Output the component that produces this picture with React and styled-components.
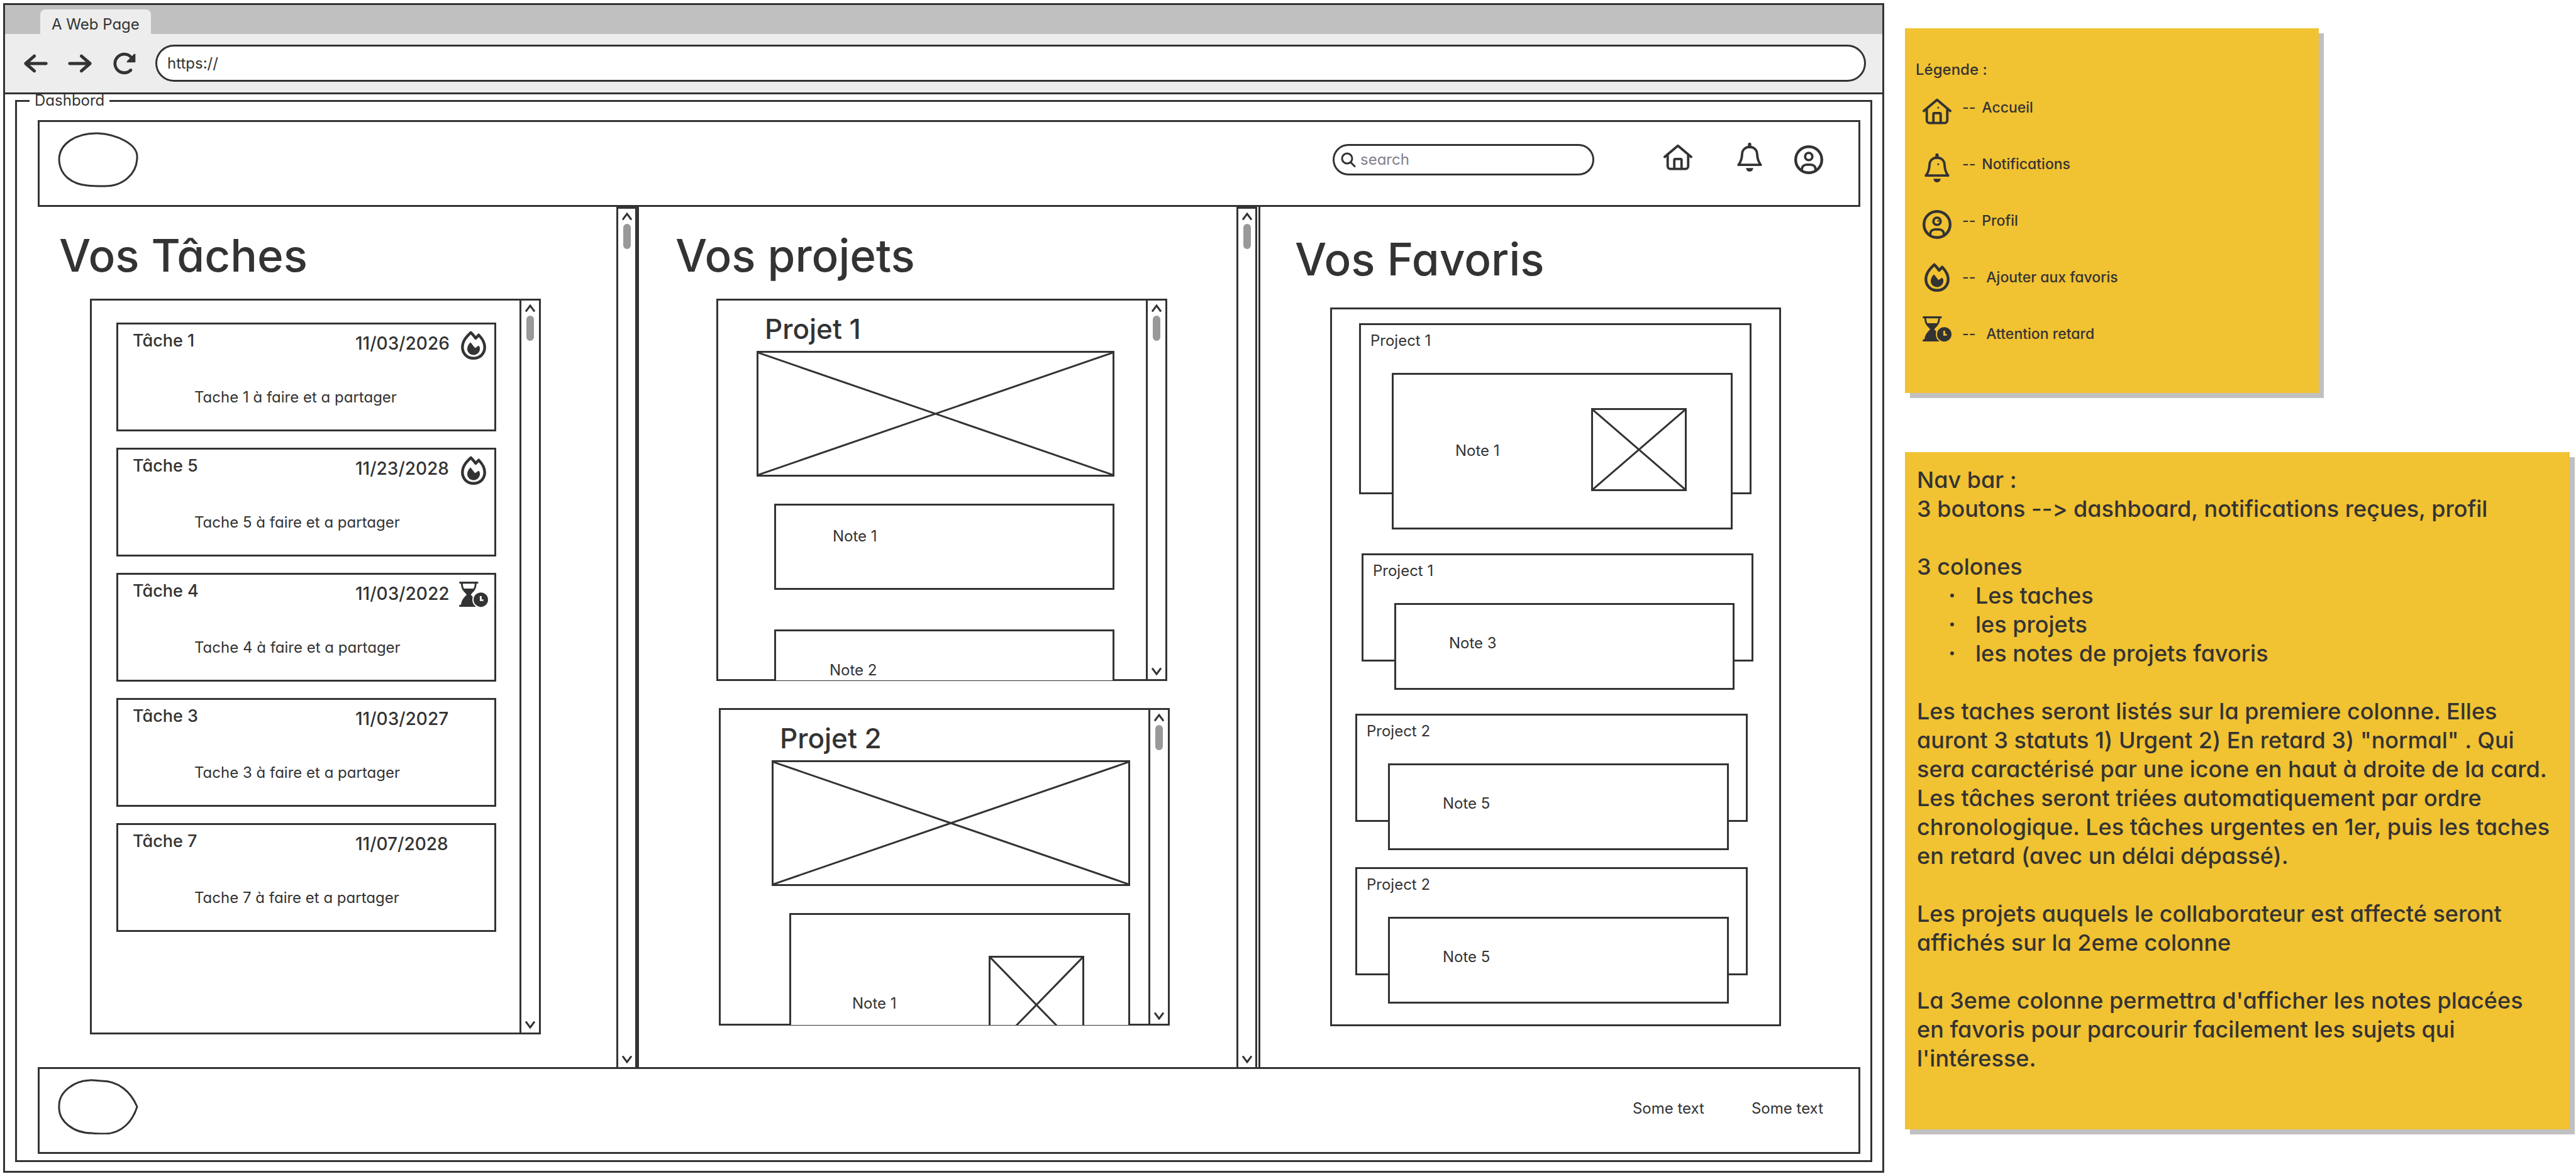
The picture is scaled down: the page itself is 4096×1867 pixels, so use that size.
import React, { useId } from "react";
import styled, { createGlobalStyle } from "styled-components";

const ink = "#333333";
const line = `3px solid ${ink}`;

const GlobalStyle = createGlobalStyle`
  *, *::before, *::after { box-sizing: border-box; }
  body {
    margin: 0;
    background: #ffffff;
    color: ${ink};
    font-family: Inter, "Liberation Sans", Arial, sans-serif;
    font-feature-settings: "cv11", "calt" 0;
    font-size: 24px;
    line-height: 32px;
  }
  h1, h2, h3, p, ul, fieldset { margin: 0; padding: 0; font-weight: inherit; }
  ul { list-style: none; }
  button, input { font: inherit; font-feature-settings: inherit; color: inherit; }
`;

/* ---------- page ---------- */

const Page = styled.div`
  display: grid;
  grid-template-columns: minmax(0, 1fr) 1100px;
  align-items: start;
  padding: 5px 0 0 5px;
`;

const Browser = styled.main`
  border: ${line};
`;

const TitleBar = styled.div`
  display: flex;
  align-items: flex-end;
  height: 46px;
  padding-left: 56px;
  background: #c0c0c0;
`;

const Tab = styled.div`
  height: 39px;
  padding: 6px 18px 0 18px;
  border-radius: 8px 8px 0 0;
  background: #ededed;
  line-height: 36px;
`;

const Toolbar = styled.div`
  display: flex;
  align-items: center;
  gap: 30px;
  height: 96px;
  padding: 0 26px 0 29px;
  border-bottom: ${line};
  background: #ededed;
`;

const IconButton = styled.button`
  display: flex;
  align-items: center;
  justify-content: center;
  padding: 0 0 ${(p) => (p.$raised ? 8 : 0)}px;
  border: 0;
  background: none;
`;

const Address = styled.input`
  flex: 1;
  min-width: 0;
  height: 59px;
  padding: 0 16px;
  border: ${line};
  border-radius: 30px;
  background: #ffffff;
`;

const Dashboard = styled.fieldset`
  min-width: 0;
  margin: 0 16px 14px;
  border: ${line};
`;

const Legend = styled.legend`
  margin-left: 20px;
  padding: 0 8px;
  line-height: 20px;
`;

const DashboardBody = styled.div`
  padding: 21px 16px 10px 33px;
`;

const Bar = styled.div`
  display: flex;
  align-items: center;
  height: 138px;
  padding: 0 56px 13px 29px;
  border: ${line};
`;

const Logo = styled.svg`
  display: block;
  width: 128px;
  height: 88px;
  margin-right: auto;
  fill: none;
  stroke: ${ink};
  stroke-width: 3;
`;

const SearchBox = styled.label`
  display: flex;
  align-items: center;
  gap: 7px;
  width: 416px;
  height: 50px;
  padding-left: 10px;
  border: ${line};
  border-radius: 25px;
`;

const SearchInput = styled.input`
  flex: 1;
  min-width: 0;
  padding: 0;
  border: 0;
  outline: 0;
  background: none;
  &::placeholder { color: #82808c; opacity: 1; }
`;

const Nav = styled.nav`
  display: grid;
  grid-template-columns: 66px 46px 46px;
  justify-items: start;
  gap: 48px;
  margin-left: 110px;
`;

const FooterLinks = styled.nav`
  display: flex;
  gap: 75px;
  padding-top: 6px;
`;

const FooterLink = styled.a`
  color: inherit;
  text-decoration: none;
`;

/* ---------- columns ---------- */

const Columns = styled.div`
  display: grid;
  grid-template-columns: 953fr 988fr 957fr;
`;

const Column = styled.section`
  display: flex;
  min-width: 0;
  padding-right: ${(p) => p.$gutter || 0}px;
  border-left: ${(p) => (p.$ruled ? line : "none")};
`;

const ColumnBody = styled.div`
  flex: 1;
  min-width: 0;
  padding: ${(p) => p.$top}px ${(p) => p.$right}px 52px ${(p) => p.$left}px;
`;

const ColumnTitle = styled.h1`
  margin: 0 0 ${(p) => p.$below}px ${(p) => -p.$outdent}px;
  font-size: 71px;
  font-weight: 500;
  line-height: 86px;
`;

const Track = styled.div`
  display: flex;
  flex: none;
  flex-direction: column;
  align-items: center;
  gap: 6px;
  width: ${(p) => (p.$outer ? 33 : 31)}px;
  padding: 6px 0;
  border-left: ${line};
  border-right: ${(p) => (p.$outer ? line : "none")};
  border-top: ${(p) => (p.$outer ? line : "none")};
`;

const Thumb = styled.div`
  width: 12px;
  height: 40px;
  margin-bottom: auto;
  border-radius: 6px;
  background: #999999;
`;

const Panel = styled.div`
  display: flex;
  height: ${(p) => (p.$height ? p.$height + "px" : "auto")};
  border: ${line};
  & + & { margin: 43px -4px 0 4px; }
`;

/* ---------- tasks ---------- */

const TaskList = styled.ul`
  display: flex;
  flex: 1;
  flex-direction: column;
  gap: 26px;
  padding: 35px 37px 160px 39px;
`;

const TaskCard = styled.li`
  padding: 10px 4px 35px 23px;
  border: ${line};
`;

const TaskHead = styled.div`
  display: grid;
  grid-template-columns: 1fr 165px 52px;
  align-items: start;
  min-height: 46px;
  font-size: 27px;
  font-weight: 500;
`;

const TaskDate = styled.time`
  font-size: 28px;
  line-height: 40px;
`;

const TaskText = styled.p`
  margin: 44px 0 0 98px;
`;

/* ---------- projects ---------- */

const ProjectBody = styled.div`
  flex: 1;
  min-width: 0;
  margin-bottom: -2px;
  padding: 18px ${(p) => p.$right}px 0 ${(p) => p.$left}px;
  overflow: hidden;
`;

const ProjectTitle = styled.h2`
  margin: 0 0 8px 13px;
  font-size: 44px;
  font-weight: 500;
  line-height: 54px;
`;

const Picture = styled.div`
  flex: none;
  width: ${(p) => (p.$width ? p.$width + "px" : "auto")};
  height: ${(p) => p.$height}px;
  border: ${line};
  svg { display: block; width: 100%; height: 100%; }
`;

const Note = styled.div`
  display: flex;
  align-items: flex-start;
  justify-content: space-between;
  height: ${(p) => p.$height}px;
  margin-top: ${(p) => p.$above}px;
  margin-left: 28px;
  padding: 0 70px 0 ${(p) => p.$inset}px;
  border: ${line};
  background: #ffffff;
`;

const Drop = styled.div`
  padding-top: ${(p) => p.$by}px;
`;

/* ---------- favourites ---------- */

const FavouriteList = styled.ul`
  flex: 1;
  min-width: 0;
  padding: 22px 0 33px;
`;

const Favourite = styled.li`
  margin-top: ${(p) => p.$above}px;
  padding: 0 ${(p) => p.$right}px ${(p) => p.$overlap}px ${(p) => p.$left}px;
`;

const FavouriteCard = styled.div`
  padding: 9px 0 0 15px;
  border: ${line};
  ${Note} {
    margin: 35px 27px ${(p) => -p.$overlap - 3}px 34px;
  }
`;

/* ---------- sticky notes ---------- */

const Side = styled.aside`
  display: grid;
  gap: 94px;
  padding: 40px 10px 0 33px;
`;

const Sticky = styled.section`
  width: ${(p) => (p.$width ? p.$width + "px" : "auto")};
  padding: ${(p) => p.$top}px 0 ${(p) => p.$bottom}px ${(p) => p.$left}px;
  background: #f1c232;
  box-shadow: 8px 8px 0 #c0c0c0;
  font-size: 23px;
  font-weight: 500;
`;

const LegendTitle = styled.h2`
  font-size: 24px;
  line-height: 30px;
`;

const LegendRow = styled.li`
  display: flex;
  align-items: center;
  height: 90px;
`;

const LegendIcon = styled.span`
  display: flex;
  align-items: ${(p) => p.$align};
  width: 74px;
  height: 58px;
  padding-left: 11px;
`;

const LegendLabel = styled.span`
  padding-left: ${(p) => (p.$wide ? 17 : 10)}px;
`;

const SpecText = styled.div`
  font-size: 36px;
  line-height: 46px;
  white-space: pre-line;
`;

const Gap = styled.div`
  height: 46px;
`;

const Bullet = styled.li`
  display: flex;
  align-items: center;
  gap: 34px;
  padding-left: 53px;
  &::before {
    content: "";
    width: 6px;
    height: 6px;
    border-radius: 50%;
    background: ${ink};
  }
`;

/* ---------- icons ---------- */

const IconSvg = styled.svg`
  display: block;
  flex: none;
  width: ${(p) => p.$size || 46}px;
  height: ${(p) => p.$size || 46}px;
  fill: none;
  stroke: ${ink};
  stroke-width: 4;
  stroke-linecap: round;
  stroke-linejoin: round;
`;

const Dot = () => <circle cx="26" cy="18" r="1.5" fill={ink} stroke="none" />;

const Home = ({ dot }) => (
  <IconSvg viewBox="0 0 48 48" aria-hidden="true">
    <path d="M2 23.500 24 5l22 18.500" />
    <path d="M7 20v18.500a5 5 0 0 0 5 5h24a5 5 0 0 0 5-5V20" />
    <path d="M18 43V28.500a1.500 1.500 0 0 1 1.500-1.500h9a1.500 1.500 0 0 1 1.500 1.500V43" />
    {dot && <Dot />}
  </IconSvg>
);

const Bell = ({ dot }) => (
  <IconSvg viewBox="0 0 48 48" aria-hidden="true">
    <path d="M24 2.500v4" strokeWidth="5.500" />
    <path d="M5.500 36.700h37C39.500 33 36.800 28 36.500 19 36.200 11 30.500 7 24 7S11.800 11 11.500 19C11.200 28 8.500 33 5.500 36.700Z" />
    <path d="M18 42h12a6 6 0 0 1-12 0Z" fill={ink} stroke="none" />
    {dot && <Dot />}
  </IconSvg>
);

const Profile = ({ dot }) => (
  <IconSvg viewBox="0 0 48 48" aria-hidden="true">
    <circle cx="24" cy="24" r="21.700" strokeWidth="4.600" />
    <circle cx="24" cy="18.700" r="6" />
    <path d="M12.500 41C12.500 35 16.500 32.200 20.500 32.200h7C31.500 32.200 35.500 35 35.500 41" />
    {dot && <Dot />}
  </IconSvg>
);

const Fire = () => (
  <IconSvg viewBox="0 0 48 48" aria-hidden="true">
    <path
      strokeWidth="4.600"
      d="M19.500 3C12 10 5.500 17 5.500 27.500 5.500 38 13.500 45.700 24 45.700S42.500 38 42.500 27.500C42.500 19 38.500 13 32.500 7L27.500 12.500C25 8.500 22.500 6 19.500 3Z"
    />
    <path
      fill={ink}
      stroke="none"
      d="M18.600 19.300C20.500 20.500 23 24.500 26.500 28.800L32 24.700C33.500 25 34.500 27 34.500 29.700 34.500 36 29.500 40.200 24 40.200S13.500 36 13.500 30C13.500 26 16 22 18.600 19.300Z"
    />
  </IconSvg>
);

const Late = () => {
  const id = useId();
  return (
    <IconSvg viewBox="0 0 48 48" aria-hidden="true">
      <mask id={id} maskUnits="userSpaceOnUse" x="0" y="0" width="48" height="48">
        <rect width="48" height="48" fill="#fff" stroke="none" />
        <circle cx="36" cy="31" r="14" fill="#000" stroke="none" />
      </mask>
      <g mask={`url(#${id})`}>
        <path d="M1.700 2.700h28.600" strokeWidth="3.400" />
        <path d="M4.500 4C4.500 14 10 17 14 22M27.500 4C27.500 14 22 17 18 22" strokeWidth="3" />
        <path
          fill={ink}
          stroke="none"
          d="M7 12.500h18C23 17 19.500 19 18.500 21.500 20 25 27.500 28 29 40H3C4.500 28 12 25 13.500 21.500 12.500 19 9 17 7 12.500Z"
        />
        <path d="M1.700 41.200h28.600" strokeWidth="3.400" />
      </g>
      <path
        fill={ink}
        stroke="none"
        fillRule="evenodd"
        d="M36 19a12 12 0 1 1 0 24 12 12 0 0 1 0-24ZM34.400 25v8h6v-2.600h-3V25Z"
      />
    </IconSvg>
  );
};

const Magnifier = () => (
  <IconSvg $size={24} viewBox="0 0 24 24" aria-hidden="true">
    <circle cx="10" cy="10" r="8" strokeWidth="3" />
    <path d="m15.500 16 6.500 6.500" strokeWidth="3" />
  </IconSvg>
);

const Arrow = ({ flip }) => (
  <IconSvg $size={40} viewBox="0 0 42 42" aria-hidden="true">
    <path
      strokeWidth="5.200"
      d={flip ? "M4 21h34M23.500 8.500 38 21 23.500 33.500" : "M38 21H4M18.500 8.500 4 21l14.500 12.500"}
    />
  </IconSvg>
);

const Reload = () => (
  <IconSvg $size={40} viewBox="0 0 42 42" aria-hidden="true">
    <path strokeWidth="5" d="M32.500 32A15.500 15.500 0 1 1 33 10.500" />
    <path fill={ink} strokeWidth="2.500" d="M39 6v12H27Z" />
  </IconSvg>
);

const Chevron = ({ down }) => (
  <svg width="16" height="12" viewBox="0 0 16 12" fill="none" stroke={ink} strokeWidth="3" aria-hidden="true">
    <path d={down ? "M1 0.500 8 10 15 0.500" : "M1 11.500 8 2l7 9.500"} />
  </svg>
);

const Cross = (props) => (
  <Picture {...props} role="img" aria-label="Image">
    <svg viewBox="0 0 100 100" preserveAspectRatio="none" stroke={ink} strokeWidth="3">
      <path d="M0 0 100 100M100 0 0 100" vectorEffect="non-scaling-stroke" />
    </svg>
  </Picture>
);

const Scrollbar = ({ outer }) => (
  <Track $outer={outer}>
    <Chevron />
    <Thumb />
    <Chevron down />
  </Track>
);

/* ---------- content ---------- */

const tasks = [
  { n: 1, date: "11/03/2026", Icon: Fire },
  { n: 5, date: "11/23/2028", Icon: Fire },
  { n: 4, date: "11/03/2022", Icon: Late },
  { n: 3, date: "11/03/2027" },
  { n: 7, date: "11/07/2028" },
];

const favourites = [
  { project: 1, note: 1, left: 43, right: 44, overlap: 56, above: 0, height: 249, inset: 98, drop: 105, picture: true },
  { project: 1, note: 3, left: 47, right: 41, overlap: 45, above: 38, height: 138, inset: 84, drop: 45 },
  { project: 2, note: 5, left: 37, right: 50, overlap: 45, above: 38, height: 138, inset: 84, drop: 45 },
  { project: 2, note: 5, left: 37, right: 50, overlap: 45, above: 27, height: 138, inset: 84, drop: 45 },
];

const legend = [
  { Icon: Home, label: "Accueil", align: "flex-end" },
  { Icon: Bell, label: "Notifications", align: "flex-end" },
  { Icon: Profile, label: "Profil", align: "flex-end" },
  { Icon: Fire, label: "Ajouter aux favoris", align: "center", wide: true },
  { Icon: Late, label: "Attention retard", align: "flex-start", wide: true },
];

export default function App() {
  return (
    <>
      <GlobalStyle />
      <Page>
        <Browser>
          <TitleBar>
            <Tab>A Web Page</Tab>
          </TitleBar>
          <Toolbar>
            <IconButton aria-label="Précédent"><Arrow /></IconButton>
            <IconButton aria-label="Suivant"><Arrow flip /></IconButton>
            <IconButton aria-label="Recharger"><Reload /></IconButton>
            <Address aria-label="Adresse" defaultValue="https://" />
          </Toolbar>
          <Dashboard>
            <Legend>Dashbord</Legend>
            <DashboardBody>
              <Bar as="header">
                <Logo viewBox="0 0 128 88" aria-hidden="true">
                  <path d="M64 2C30 1 2 18 2 44c1 26 22 39 45 41 10 1 16 1 25 1 32 1 54-20 54-46C127 20 96 4 64 2Z" />
                </Logo>
                <SearchBox>
                  <Magnifier />
                  <SearchInput type="search" aria-label="Rechercher" placeholder="search" />
                </SearchBox>
                <Nav>
                  <IconButton $raised aria-label="Accueil"><Home /></IconButton>
                  <IconButton $raised aria-label="Notifications"><Bell /></IconButton>
                  <IconButton aria-label="Profil"><Profile /></IconButton>
                </Nav>
              </Bar>

              <Columns>
                <Column>
                  <ColumnBody $top={34} $right={120} $left={83}>
                    <ColumnTitle $below={26} $outdent={49}>Vos Tâches</ColumnTitle>
                    <Panel>
                      <TaskList>
                        {tasks.map(({ n, date, Icon }) => (
                          <TaskCard key={n}>
                            <TaskHead>
                              <span>Tâche {n}</span>
                              <TaskDate>{date}</TaskDate>
                              {Icon && <Icon />}
                            </TaskHead>
                            <TaskText>Tache {n} à faire et a partager</TaskText>
                          </TaskCard>
                        ))}
                      </TaskList>
                      <Scrollbar />
                    </Panel>
                  </ColumnBody>
                  <Scrollbar outer />
                </Column>

                <Column $ruled $gutter={2}>
                  <ColumnBody $top={34} $right={110} $left={123}>
                    <ColumnTitle $below={26} $outdent={65}>Vos projets</ColumnTitle>
                    <Panel $height={608}>
                      <ProjectBody $left={61} $right={50}>
                        <ProjectTitle>Projet 1</ProjectTitle>
                        <Cross $height={200} />
                        <Note $above={43} $height={137} $inset={90}>
                          <Drop $by={33}>Note 1</Drop>
                        </Note>
                        <Note $above={63} $height={137} $inset={85}>
                          <Drop $by={46}>Note 2</Drop>
                        </Note>
                      </ProjectBody>
                      <Scrollbar />
                    </Panel>
                    <Panel $height={505}>
                      <ProjectBody $left={81} $right={29}>
                        <ProjectTitle>Projet 2</ProjectTitle>
                        <Cross $height={200} />
                        <Note $above={43} $height={250} $inset={97}>
                          <Drop $by={125}>Note 1</Drop>
                          <Drop $by={65}><Cross $width={152} $height={156} /></Drop>
                        </Note>
                      </ProjectBody>
                      <Scrollbar />
                    </Panel>
                  </ColumnBody>
                  <Scrollbar outer />
                </Column>

                <Column $ruled>
                  <ColumnBody $top={40} $right={126} $left={111}>
                    <ColumnTitle $below={34} $outdent={56}>Vos Favoris</ColumnTitle>
                    <Panel>
                      <FavouriteList>
                        {favourites.map((f, i) => (
                          <Favourite key={i} $left={f.left} $right={f.right} $overlap={f.overlap} $above={f.above}>
                            <FavouriteCard $overlap={f.overlap}>
                              Project {f.project}
                              <Note $height={f.height} $inset={f.inset}>
                                <Drop $by={f.drop}>Note {f.note}</Drop>
                                {f.picture && <Drop $by={53}><Cross $width={152} $height={132} /></Drop>}
                              </Note>
                            </FavouriteCard>
                          </Favourite>
                        ))}
                      </FavouriteList>
                    </Panel>
                  </ColumnBody>
                </Column>
              </Columns>

              <Bar as="footer">
                <Logo viewBox="0 0 128 88" aria-hidden="true">
                  <path d="M50 2C26 3 2 20 2 42 0 68 26 86 54 86c6 1 12 1 22 1 26-1 43-20 50-43C116 20 96 3 70 3 62 3 56 1 50 2Z" />
                </Logo>
                <FooterLinks>
                  <FooterLink href="#">Some text</FooterLink>
                  <FooterLink href="#">Some text</FooterLink>
                </FooterLinks>
              </Bar>
            </DashboardBody>
          </Dashboard>
        </Browser>

        <Side>
          <Sticky $width={658} $top={51} $bottom={49} $left={17}>
            <LegendTitle>Légende :</LegendTitle>
            <ul>
              {legend.map(({ Icon, label, align, wide }) => (
                <LegendRow key={label}>
                  <LegendIcon $align={align}><Icon dot /></LegendIcon>
                  <span>--</span>
                  <LegendLabel $wide={wide}>{label}</LegendLabel>
                </LegendRow>
              ))}
            </ul>
          </Sticky>
          <Sticky $top={21} $bottom={90} $left={19}>
            <SpecText>
              <p>{"Nav bar :\n3 boutons --> dashboard, notifications reçues, profil"}</p>
              <Gap />
              <p>3 colones</p>
              <ul>
                <Bullet>Les taches</Bullet>
                <Bullet>les projets</Bullet>
                <Bullet>les notes de projets favoris</Bullet>
              </ul>
              <Gap />
              <p>
                {"Les taches seront listés sur la premiere colonne. Elles\nauront 3 statuts 1) Urgent 2) En retard 3) \"normal\" . Qui\nsera caractérisé par une icone en haut à droite de la card.\nLes tâches seront triées automatiquement par ordre\nchronologique. Les tâches urgentes en 1er, puis les taches\nen retard (avec un délai dépassé)."}
              </p>
              <Gap />
              <p>{"Les projets auquels le collaborateur est affecté seront\naffichés sur la 2eme colonne"}</p>
              <Gap />
              <p>{"La 3eme colonne permettra d'afficher les notes placées\nen favoris pour parcourir facilement les sujets qui\nl'intéresse."}</p>
            </SpecText>
          </Sticky>
        </Side>
      </Page>
    </>
  );
}
